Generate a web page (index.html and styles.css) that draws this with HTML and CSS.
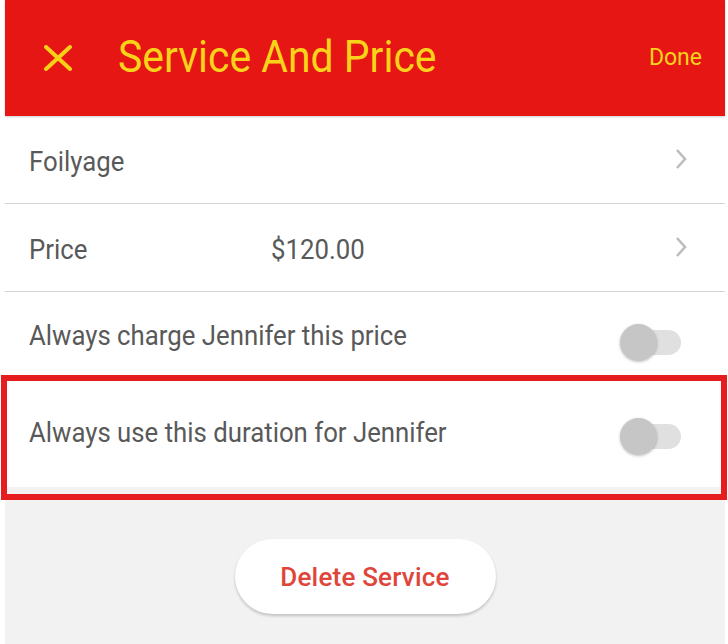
FILE: index.html
```html
<!DOCTYPE html>
<html lang="en">
<head>
    <meta charset="UTF-8">
    <meta name="viewport" content="width=device-width, initial-scale=1.0">
    <title>Service And Price</title>
    <link rel="stylesheet" href="styles.css">
</head>
<body>
    <div class="screen">
        <div class="app-bar">
            <svg class="close-icon" width="30" height="26" viewBox="0 0 30 26">
                <path d="M3 2 L27 24 M27 2 L3 24" stroke="#f7d117" stroke-width="4" stroke-linecap="round"/>
            </svg>
            <div class="title"><span class="narrow">Service And Price</span></div>
            <div class="done">Done</div>
        </div>

        <div class="list">
            <div class="row row-link">
                <span class="label"><span class="narrow">Foilyage</span></span>
                <svg class="chevron" width="14" height="22" viewBox="0 0 14 22">
                    <path d="M3 2 L11 11 L3 20" fill="none" stroke="#bdbdbd" stroke-width="2.6"/>
                </svg>
            </div>
            <div class="row row-link">
                <span class="label label-short"><span class="narrow">Price</span></span>
                <span class="value"><span class="narrow">$120.00</span></span>
                <svg class="chevron" width="14" height="22" viewBox="0 0 14 22">
                    <path d="M3 2 L11 11 L3 20" fill="none" stroke="#bdbdbd" stroke-width="2.6"/>
                </svg>
            </div>
            <div class="row row-toggle">
                <span class="label"><span class="narrow">Always charge Jennifer this price</span></span>
                <div class="switch"><div class="knob"></div></div>
            </div>
            <div class="row row-toggle row-tall">
                <span class="label"><span class="narrow">Always use this duration for Jennifer</span></span>
                <div class="switch"><div class="knob"></div></div>
            </div>
        </div>

        <div class="actions">
            <button class="delete-btn">Delete Service</button>
        </div>
    </div>
    <div class="highlight"></div>
</body>
</html>
```

FILE: styles.css
```css
body {
    margin: 0;
    background-color: #ffffff;
    font-family: Roboto, "Noto Sans", sans-serif;
}

.screen {
    margin-left: 5px;
    width: 720px;
    height: 644px;
    display: flex;
    flex-direction: column;
    background-color: #f2f2f2;
}

/* text in the screenshot is a bit narrower than plain Roboto */
.narrow {
    display: inline-block;
    transform: scaleX(0.92);
    transform-origin: left center;
    white-space: nowrap;
}

.app-bar {
    height: 116px;
    display: flex;
    align-items: center;
    padding: 0 23px 0 38px;
    background-color: #e61614;
    box-shadow: 0 1px 2px rgba(0, 0, 0, 0.2);
    position: relative;
    z-index: 1;
}

.close-icon {
    margin-top: -1px;
}

.title {
    margin-left: 45px;
    flex: 1;
    color: #f9d31a;
    font-size: 44px;
    margin-top: -2px;
}

.title .narrow {
    transform: scaleX(0.93);
}

.done {
    color: #f9d31a;
    font-size: 23px;
    margin-top: -2px;
}

.list {
    background-color: #ffffff;
}

.row {
    height: 88px;
    display: flex;
    align-items: center;
    padding: 0 37px 0 24px;
    border-bottom: 1px solid #d6d6d6;
    box-sizing: border-box;
}

.row-link .label,
.row-link .value {
    margin-top: 4px;
}

.row-tall {
    height: 107px;
    border-bottom: none;
    padding-bottom: 3px;
}

.label {
    flex: 1;
    color: #595959;
    font-size: 28px;
}

.label-short {
    flex: 0 0 242px;
}

.value {
    flex: 1;
    color: #595959;
    font-size: 28px;
}

.chevron {
    margin-top: -1px;
}

.row-toggle {
    padding-right: 44px;
}

.switch {
    width: 58px;
    height: 25px;
    border-radius: 13px;
    background-color: #e0e0e0;
    position: relative;
    margin-top: 13px;
}

.row-tall .switch {
    margin-top: 9px;
}

.knob {
    position: absolute;
    left: -3px;
    top: -6px;
    width: 37px;
    height: 37px;
    border-radius: 50%;
    background-color: #c6c6c6;
    box-shadow: 0 1px 3px rgba(0, 0, 0, 0.25);
}

.actions {
    flex: 1;
    display: flex;
    justify-content: center;
    padding-top: 52px;
}

.delete-btn {
    width: 261px;
    height: 75px;
    border: none;
    border-radius: 38px;
    background-color: #ffffff;
    box-shadow: 0 2px 3px rgba(0, 0, 0, 0.2);
    color: #e0453a;
    font-family: Roboto, "Noto Sans", sans-serif;
    font-size: 26px;
    font-weight: 500;
    letter-spacing: 0.2px;
    cursor: pointer;
}

.highlight {
    position: absolute;
    left: 1px;
    top: 375px;
    width: 714px;
    height: 113px;
    border: 6px solid #e51d1f;
}
```
